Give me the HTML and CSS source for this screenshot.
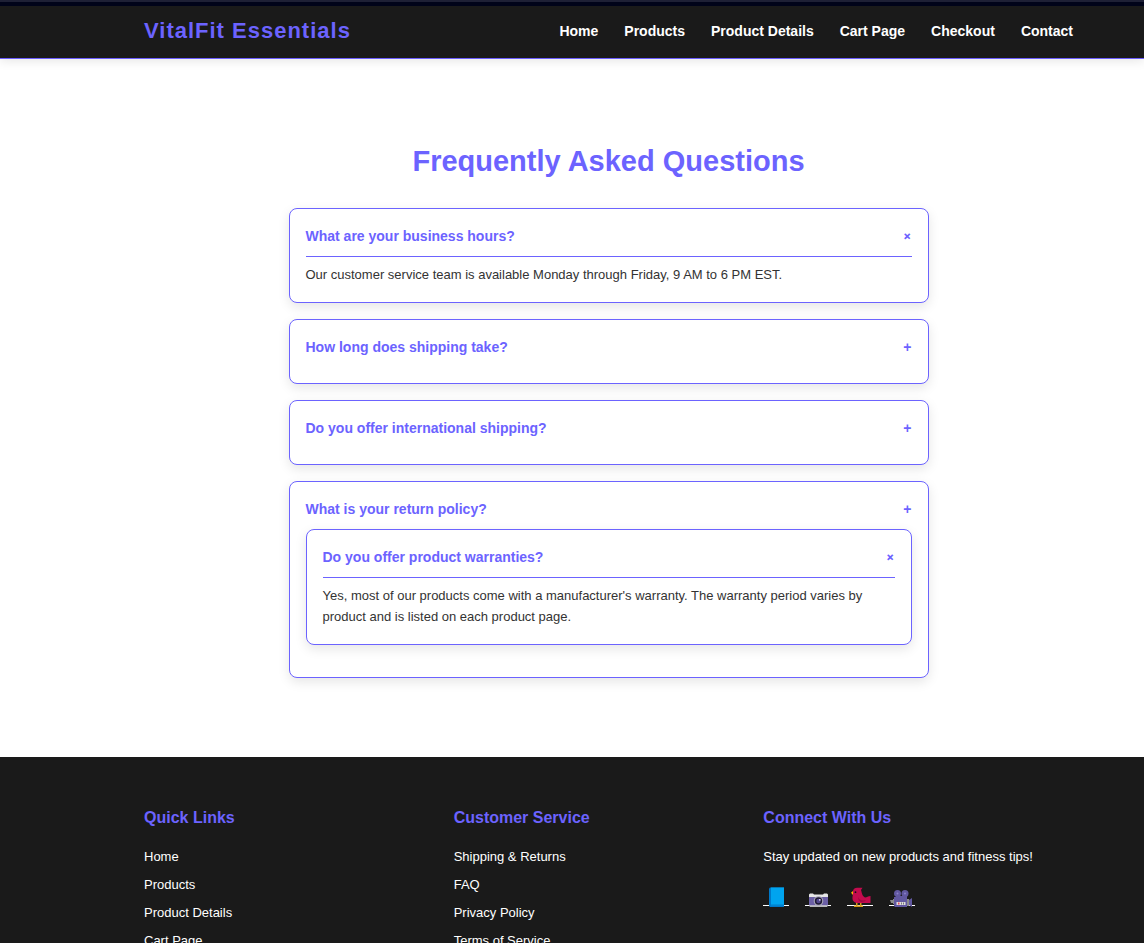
FILE: index.html
```html
<!DOCTYPE html>
<html lang="en">
<head>
<meta charset="utf-8">
<title>VitalFit Essentials - FAQ</title>
<meta name="viewport" content="width=device-width, initial-scale=1">
<link rel="stylesheet" href="styles.css">
</head>
<body>
<div class="top-strip"></div>
<header class="site-header">
  <div class="logo">VitalFit Essentials</div>
  <nav class="main-nav" aria-label="Main">
    <a href="#">Home</a>
    <a href="#">Products</a>
    <a href="#">Product Details</a>
    <a href="#">Cart Page</a>
    <a href="#">Checkout</a>
    <a href="#">Contact</a>
  </nav>
</header>

<main class="faq">
  <h1 class="faq-title">Frequently Asked Questions</h1>
  <div class="faq-list">
    <section class="faq-item open">
      <button class="question" type="button" aria-expanded="true">What are your business hours?<span class="toggle" aria-hidden="true">+</span></button>
      <p class="answer">Our customer service team is available Monday through Friday, 9 AM to 6 PM EST.</p>
    </section>
    <section class="faq-item">
      <button class="question" type="button" aria-expanded="false">How long does shipping take?<span class="toggle" aria-hidden="true">+</span></button>
    </section>
    <section class="faq-item">
      <button class="question" type="button" aria-expanded="false">Do you offer international shipping?<span class="toggle" aria-hidden="true">+</span></button>
    </section>
    <section class="faq-item">
      <button class="question" type="button" aria-expanded="false">What is your return policy?<span class="toggle" aria-hidden="true">+</span></button>
      <section class="faq-item open">
        <button class="question" type="button" aria-expanded="true">Do you offer product warranties?<span class="toggle" aria-hidden="true">+</span></button>
        <p class="answer">Yes, most of our products come with a manufacturer's warranty. The warranty period varies by product and is listed on each product page.</p>
      </section>
    </section>
  </div>
</main>

<footer class="site-footer">
  <section>
    <h2 class="footer-title">Quick Links</h2>
    <ul class="footer-links">
      <li><a href="#">Home</a></li>
      <li><a href="#">Products</a></li>
      <li><a href="#">Product Details</a></li>
      <li><a href="#">Cart Page</a></li>
    </ul>
  </section>
  <section>
    <h2 class="footer-title">Customer Service</h2>
    <ul class="footer-links">
      <li><a href="#">Shipping &amp; Returns</a></li>
      <li><a href="#">FAQ</a></li>
      <li><a href="#">Privacy Policy</a></li>
      <li><a href="#">Terms of Service</a></li>
    </ul>
  </section>
  <section>
    <h2 class="footer-title">Connect With Us</h2>
    <p class="footer-text">Stay updated on new products and fitness tips!</p>
    <div class="social">
      <a href="#" aria-label="Facebook"><svg viewBox="0 0 26 22"><path fill="#fff" d="M0 18h26v1H0z"/><path fill="#0078c8" d="M6 1.500L7 .5h14V20H7l-1-1z"/><path fill="#00a4ef" d="M8 .5h13V17H8z"/><path fill="#0091dc" d="M8 17h13v1.500H8z"/></svg></a>
      <a href="#" aria-label="Instagram"><svg viewBox="0 0 26 22"><path fill="#fff" d="M0 18h26v1H0z"/><path fill="#e6e6e6" d="M4 7.500l1-1h3l1 1h9l1-1h3l1 1v3H4z"/><path fill="#6b5fa5" d="M4 10h19v8.500H4z"/><path fill="#b8b8b8" d="M4 18.500h19L22 20H5z"/><circle cx="13.500" cy="14" r="4.800" fill="#a9a6b8"/><circle cx="13.500" cy="14" r="3.700" fill="#1f1a35"/><circle cx="13.500" cy="14" r="2.200" fill="#51468c"/><circle cx="14.800" cy="12.800" r=".9" fill="#e6dcff"/></svg></a>
      <a href="#" aria-label="Twitter"><svg viewBox="0 0 26 22"><path fill="#fff" d="M0 18h26v1H0z"/><path fill="#d39a18" d="M9 15h1.500v3.500H13V15h1.500v3.500H16V20H7v-1.500h2z"/><path fill="#c30b4e" d="M6 6c-.5-4 2-5.200 5-5.200h4.500L14 3c1 3 1 6 4 7.500 2 0 3-1.500 5.500-1.500v7H11.500C7.500 16 5 14 5.500 10c0-1 .5-2 .5-4z"/><path fill="#a0083f" d="M11 10c1 3 4 4 8 3-2 3-8 3-8-3z"/><path fill="#ffb900" d="M6 4L4 5.800 6 8z"/><circle cx="8.500" cy="5.200" r=".9" fill="#111"/></svg></a>
      <a href="#" aria-label="YouTube"><svg viewBox="0 0 26 22"><path fill="#fff" d="M0 18h26v1H0z"/><circle cx="8.500" cy="6.500" r="3.500" fill="#6158a0"/><circle cx="16" cy="6.500" r="3.500" fill="#6158a0"/><circle cx="8.500" cy="6.500" r="1" fill="#8a80c8"/><circle cx="16" cy="6.500" r="1" fill="#8a80c8"/><path fill="#6158a0" d="M7 9h11v1H7zM5 10h13v10H6l-1-1zM20 13l3-2v9l-3-2z"/><path fill="#8a8a8a" d="M1 13h3v3H2zM4 12h1v5H4zM18 12h2v7h-2z"/><path fill="#ddd" d="M7.500 15h9v3h-9z"/><path fill="#e8485a" d="M9 15.500h1.500v2H9z"/><path fill="#777" d="M12 15.500h1v2h-1zM14 15.500h1v2h-1z"/></svg></a>
    </div>
  </section>
</footer>
</body>
</html>
```
FILE: styles.css
```css
* {
  box-sizing: border-box;
}

html {
  scrollbar-width: none;
}

body {
  margin: 0;
  background: #fff;
  color: #333;
  font-family: "Liberation Sans", Arial, sans-serif;
  font-size: 13px;
  line-height: 21px;
}

.top-strip {
  height: 6px;
  background: #01041a;
  border-top: 2px solid #1f2136;
}

.site-header {
  display: flex;
  align-items: center;
  justify-content: space-between;
  padding: 7px 71px 9px 144px;
  background: #1a1a1a;
  border-bottom: 1px solid #6c5dff;
  box-shadow: 0 2px 10px rgba(0, 0, 0, 0.1);
}

.logo {
  color: #6c63ff;
  font-size: 22px;
  font-weight: bold;
  line-height: 36px;
  letter-spacing: 1px;
}

.main-nav {
  display: flex;
  gap: 26px;
}

.main-nav a {
  color: #fff;
  font-size: 14px;
  font-weight: bold;
  text-decoration: none;
}

.faq {
  padding: 80px 71px 79px 144px;
}

.faq-title {
  margin: 0 0 25px;
  color: #6c63ff;
  font-size: 29px;
  line-height: 44px;
  text-align: center;
}

.faq-list {
  display: flex;
  flex-direction: column;
  gap: 16px;
  max-width: 640px;
  margin: 0 auto;
}

.faq-item {
  padding: 16px;
  background: #fff;
  border: 1px solid #6c63ff;
  border-radius: 8px;
  box-shadow: 0 4px 12px rgba(0, 0, 0, 0.1);
}

.faq-item .faq-item {
  margin-bottom: 16px;
}

.question {
  display: flex;
  justify-content: space-between;
  width: 100%;
  padding: 0 0 8px;
  border: 0;
  background: none;
  color: #6c63ff;
  font: bold 14px/23px "Liberation Sans", Arial, sans-serif;
  text-align: left;
  cursor: pointer;
}

.open > .question .toggle {
  transform: rotate(45deg);
}

.answer {
  margin: 0;
  padding: 7px 0 1px;
  border-top: 1px solid #6c63ff;
}

.site-footer {
  display: grid;
  grid-template-columns: repeat(3, 1fr);
  height: auto;
  padding: 48px 71px 48px 144px;
  background: #1a1a1a;
  color: #fff;
  line-height: 20px;
}

.footer-title {
  margin: 0 0 16px;
  color: #6c63ff;
  font-size: 16px;
  line-height: 26px;
}

.footer-links {
  display: grid;
  gap: 8px;
  margin: 0;
  padding: 0;
  list-style: none;
}

.footer-links a {
  color: #fff;
  text-decoration: none;
}

.footer-text {
  margin: 0 0 20px;
}

.social {
  display: flex;
  gap: 16px;
}

.social svg {
  display: block;
  width: 26px;
  height: 22px;
}
```
